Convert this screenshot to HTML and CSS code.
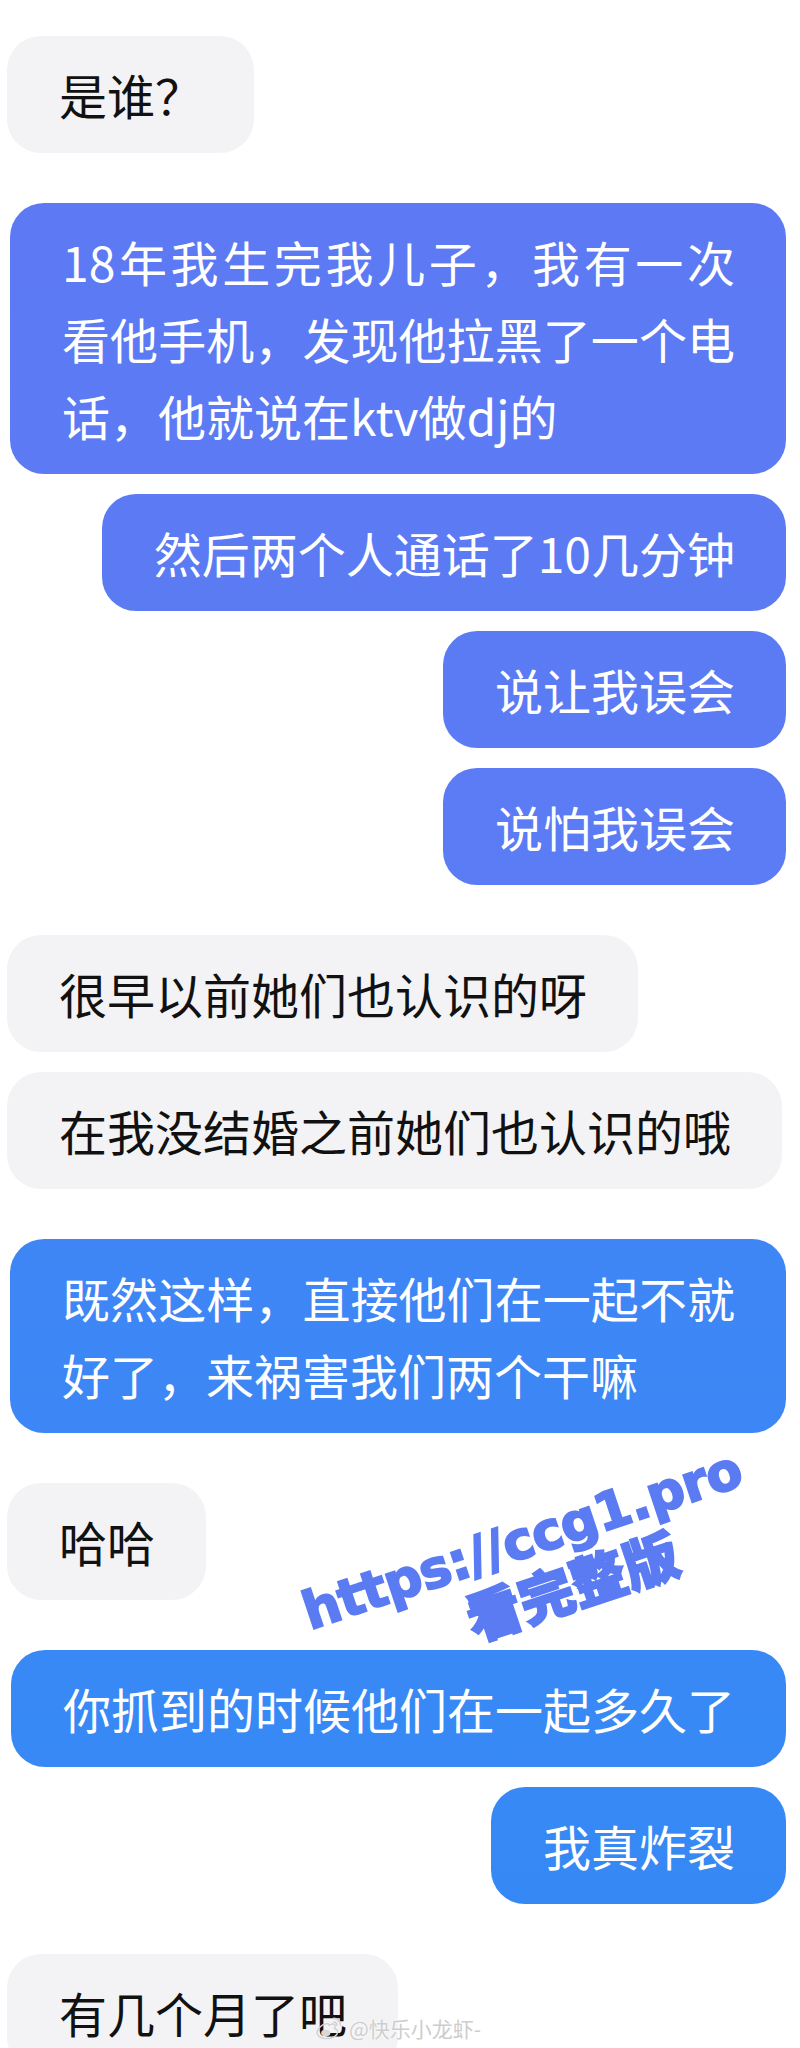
FILE: index.html
```html
<!DOCTYPE html>
<html lang="zh-CN">
<head>
<meta charset="UTF-8">
<meta name="viewport" content="width=device-width, initial-scale=1.0">
<title>聊天记录</title>
<link rel="stylesheet" href="styles.css">
</head>
<body>
  <div class="screen">
    <div class="chat">
      <div class="msg them">是谁？</div>
      <div class="msg me">18年我生完我儿子，我有一次看他手机，发现他拉黑了一个电话，他就说在ktv做dj的</div>
      <div class="msg me">然后两个人通话了10几分钟</div>
      <div class="msg me">说让我误会</div>
      <div class="msg me">说怕我误会</div>
      <div class="msg them">很早以前她们也认识的呀</div>
      <div class="msg them">在我没结婚之前她们也认识的哦</div>
      <div class="msg me">既然这样，直接他们在一起不就好了，来祸害我们两个干嘛</div>
      <div class="msg them">哈哈</div>
      <div class="msg me">你抓到的时候他们在一起多久了</div>
      <div class="msg me">我真炸裂</div>
      <div class="msg them">有几个月了吧</div>
    </div>

    <!-- overlay stamp on top of the chat -->
    <div class="stamp">
      <div class="stamp-url">https://ccg1.pro</div>
      <div class="stamp-sub">看完整版</div>
    </div>

    <div class="credit">
      <svg class="credit-logo" width="28" height="24" viewBox="0 0 30 26">
        <path d="M12 8.5c-5.5 1-10 5.5-10 9.5 0 4 5 6.5 10.5 6.5 6.5 0 12-3.5 12-7.5 0-2.5-2.5-3-3.5-3.3 1-2 1.3-4-.5-4.8-1.8-.8-4.5.6-5.5 1-.4-1.6-1-2.2-3-1.4z" fill="none" stroke="#d2d2d2" stroke-width="1.6"/>
        <ellipse cx="11.5" cy="18.5" rx="5" ry="3.6" fill="#d8d8d8"/>
        <path d="M20 2.5a7.5 7.5 0 0 1 7.5 7.5" fill="none" stroke="#d2d2d2" stroke-width="1.8" stroke-linecap="round"/>
        <path d="M20 6.5a3.5 3.5 0 0 1 3.5 3.5" fill="none" stroke="#d2d2d2" stroke-width="1.6" stroke-linecap="round"/>
      </svg>
      <span>@快乐小龙虾-</span>
    </div>
  </div>
</body>
</html>
```

FILE: styles.css
```css
html,
body {
  margin: 0;
  height: 2048px;
  overflow: hidden;
  background: #fff;
}

.screen {
  position: relative;
  width: 800px;
  height: 2048px;
  font-family: "Noto Sans CJK SC", "Noto Sans", sans-serif;
}

.chat {
  display: flex;
  flex-direction: column;
  padding: 36px 14px 0 7px;
}

.msg {
  box-sizing: border-box;
  max-width: 776px;
  padding: 20px 51px 20px 52px;
  border-radius: 34px;
  font-size: 48px;
  line-height: 77px;
  text-align: justify;
}

.msg + .msg {
  margin-top: 20px;
}

/* more room when the other side starts talking */
.msg.them + .msg.me,
.msg.me + .msg.them {
  margin-top: 50px;
}

.msg.them {
  align-self: flex-start;
  background: #f3f3f5;
  color: #111;
}

.msg.me {
  align-self: flex-end;
  color: #fff;
  /* colour shifts with the place on screen, like the app does */
  background: linear-gradient(180deg, #5d79f3 0px, #5a7cf4 900px, #3f86f5 1250px, #3889f5 1700px, #3488f4 2048px) fixed;
}

.stamp {
  position: absolute;
  left: 287px;
  top: 1512px;
  width: 470px;
  transform: rotate(-18.5deg);
  transform-origin: 50% 28px;
  color: #5b7bf2;
  text-align: center;
  pointer-events: none;
}

.stamp-url {
  font-family: "DejaVu Sans", sans-serif;
  font-weight: 700;
  font-size: 52px;
  line-height: 56px;
  letter-spacing: -0.5px;
  -webkit-text-stroke: 2px #5b7bf2;
}

.stamp-sub {
  padding-left: 66px;
  font-family: "Noto Sans CJK SC", sans-serif;
  font-weight: 900;
  font-size: 55px;
  line-height: 58px;
  -webkit-text-stroke: 2px #5b7bf2;
}

.credit {
  position: absolute;
  left: 315px;
  top: 2013px;
  display: flex;
  align-items: center;
  gap: 6px;
  color: #cdcdcd;
  font-size: 21px;
  line-height: 30px;
  text-shadow: 0 0 2px #fff, 0 0 1px #fff;
}

.credit-logo {
  flex: none;
}
```
